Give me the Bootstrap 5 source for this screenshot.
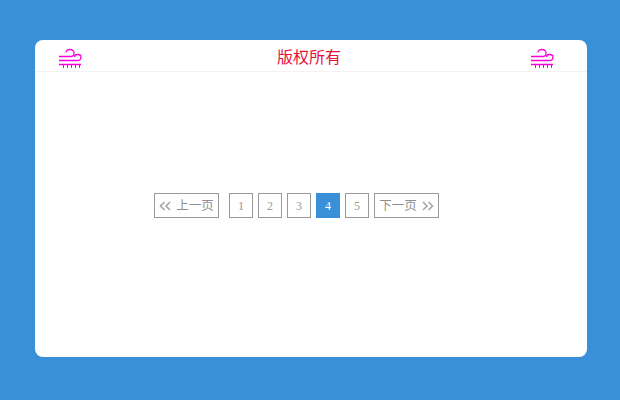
<!DOCTYPE html>
<html lang="zh">
<head>
<meta charset="utf-8">
<link href="https://cdn.jsdelivr.net/npm/bootstrap@5.3.0/dist/css/bootstrap.min.css" rel="stylesheet">
<style>
html,body{height:100%;}
body{background:#3a8fd9;font-family:"Liberation Sans","Noto Sans CJK SC",sans-serif;}
.stage{padding:40px 33px 43px 35px;height:400px;}
.panel{height:317px;background:#fff;border-radius:8px;}
.head{height:32px;border-bottom:1px solid #f2f2f2;padding:0 33px 0 23px;}
.head-title{color:#e60f3c;font-size:16px;line-height:20px;margin-top:8px;margin-left:6px;}
.wind{width:24px;height:22px;display:block;margin-top:7px;}
.pager-wrap{height:267px;padding-right:29px;}
.pg{height:25px;min-width:24px;border:1px solid #999;color:#999;font-size:12px;font-family:"Liberation Serif","Noto Sans CJK SC",serif;text-decoration:none;display:flex;align-items:center;justify-content:center;}
.pg-wide{width:65px;font-size:12.5px;font-family:"Noto Sans CJK SC",sans-serif;gap:5px;color:#8f8f8f;}
.pg-on{background:#3a8fd9;border-color:#3a8fd9;color:#fff;}
.pg-gap{margin-right:5px;}
.chev{width:12px;height:10px;display:block;}
.pager-row{gap:5px;}
</style>
</head>
<body>
<div class="stage">
  <div class="panel overflow-hidden">
    <div class="head d-flex justify-content-between align-items-start">
      <svg class="wind" viewBox="0 0 24 22" fill="none" stroke="#fa00dc" stroke-width="1.3"><path d="M1 9.5H12.5C14.5 9.5 16 8 16 6S14.5 2.5 12 2.5 8 3.5 8 5.5"/><path d="M1 13.5H19.5C21.5 13.5 23 12 23 10S21.5 7.5 19.5 7.5 16.5 8.5 16.5 10"/><path d="M1 17.5H23"/><path d="M5.5 17.5V21M9.5 17.5V21M13.5 17.5V21M17.5 17.5V21M21.5 17.5V21" stroke-width="1"/></svg>
      <div class="head-title">版权所有</div>
      <svg class="wind" viewBox="0 0 24 22" fill="none" stroke="#fa00dc" stroke-width="1.3"><path d="M1 9.5H12.5C14.5 9.5 16 8 16 6S14.5 2.5 12 2.5 8 3.5 8 5.5"/><path d="M1 13.5H19.5C21.5 13.5 23 12 23 10S21.5 7.5 19.5 7.5 16.5 8.5 16.5 10"/><path d="M1 17.5H23"/><path d="M5.5 17.5V21M9.5 17.5V21M13.5 17.5V21M17.5 17.5V21M21.5 17.5V21" stroke-width="1"/></svg>
    </div>
    <div class="pager-wrap d-flex align-items-center justify-content-center">
      <nav class="pager-row d-flex">
        <a class="pg pg-wide pg-gap" href="#"><svg class="chev" viewBox="0 0 12 10" fill="none" stroke="#a5a5a5" stroke-width="1.6"><path d="M5.5 1L1.5 5L5.5 9M11 1L7 5L11 9"/></svg>上一页</a>
        <a class="pg" href="#">1</a>
        <a class="pg" href="#">2</a>
        <a class="pg" href="#">3</a>
        <a class="pg pg-on" href="#">4</a>
        <a class="pg" href="#">5</a>
        <a class="pg pg-wide" href="#">下一页<svg class="chev" viewBox="0 0 12 10" fill="none" stroke="#a5a5a5" stroke-width="1.6"><path d="M1 1L5 5L1 9M6.5 1L10.5 5L6.5 9"/></svg></a>
      </nav>
    </div>
  </div>
</div>
<script src="https://cdn.jsdelivr.net/npm/bootstrap@5.3.0/dist/js/bootstrap.bundle.min.js"></script>
</body>
</html>
